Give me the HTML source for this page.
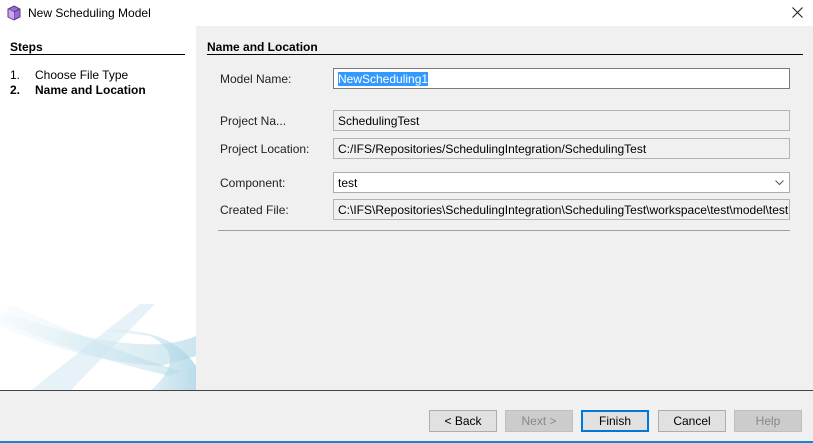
<!DOCTYPE html>
<html><head><style>
*{margin:0;padding:0;box-sizing:border-box}
body{width:813px;height:443px;background:#f0f0f0;font-family:"Liberation Sans",sans-serif;font-size:12px;color:#000;position:relative;overflow:hidden}
.a{position:absolute}
.lbl{position:absolute;left:220px;font-size:12px;color:#222}
.box{position:absolute;left:333px;width:457px;height:21px;border:1px solid #b4b4b4;padding:3px 0 0 4px;white-space:nowrap;overflow:hidden}
.btn{position:absolute;top:410px;width:68px;height:22px;border:1px solid #adadad;background:#e1e1e1;text-align:center;line-height:20px}
</style></head><body>
<div class="a" style="left:0;top:0;width:813px;height:26px;background:#fff"></div>
<svg class="a" style="left:6px;top:5px" width="16" height="16" viewBox="0 0 16 16"><path d="M8 1L14 4V12L8 15L2 12V4Z" fill="#9a6ad0" stroke="#5a3590"/><path d="M2 4L8 7L14 4M8 7V15" fill="none" stroke="#5a3590"/><path d="M2.5 4.3L8 7V14.5L2.5 11.7Z" fill="#c9a8ee"/></svg>
<div class="a" style="left:28px;top:6px;font-size:12px">New Scheduling Model</div>
<svg class="a" style="left:792px;top:7px" width="11" height="11"><path d="M0.5 0.5L10.5 10.5M10.5 0.5L0.5 10.5" stroke="#222" stroke-width="1.1"/></svg>
<div class="a" style="left:0;top:26px;width:196px;height:365px;background:#fff;overflow:hidden">
<svg width="196" height="365" style="position:absolute;left:0;top:0">
<defs><linearGradient id="g" x1="0" x2="1"><stop offset="0" stop-color="#d4eaf3" stop-opacity=".2"/><stop offset="1" stop-color="#a9d3e5"/></linearGradient></defs>
<path d="M0 300 Q80 335 160 340 L196 330 V310 Q140 335 0 285Z" fill="url(#g)" opacity=".6"/>
<path d="M10 278 Q100 320 180 345 L170 350 Q80 330 0 295Z" fill="url(#g)" opacity=".5"/>
<path d="M140 278 L155 278 L70 365 L30 365Z" fill="#cde6f1" opacity=".5"/>
<path d="M100 304 Q170 300 196 340 V365 H150 Q190 330 150 310Z" fill="url(#g)" opacity=".8"/>
</svg>
<div class="a" style="left:10px;top:14px;font-weight:bold">Steps</div>
<div class="a" style="left:10px;top:28px;width:175px;height:1px;background:#000"></div>
<div class="a" style="left:10px;top:42px">1.</div><div class="a" style="left:35px;top:42px">Choose File Type</div>
<div class="a" style="left:10px;top:57px;font-weight:bold">2.</div><div class="a" style="left:35px;top:57px;font-weight:bold">Name and Location</div>
</div>
<div class="a" style="left:207px;top:40px;font-weight:bold">Name and Location</div>
<div class="a" style="left:207px;top:54px;width:596px;height:1px;background:#000"></div>
<div class="lbl" style="top:72px">Model Name:</div>
<div class="box" style="top:68px;background:#fff;border-color:#7a7a7a"><span style="background:#3399ff;color:#fff">NewScheduling1</span></div>
<div class="lbl" style="top:114px">Project Na...</div>
<div class="box" style="top:110px">SchedulingTest</div>
<div class="lbl" style="top:142px">Project Location:</div>
<div class="box" style="top:138px">C:/IFS/Repositories/SchedulingIntegration/SchedulingTest</div>
<div class="lbl" style="top:176px">Component:</div>
<div class="box" style="top:172px;background:#fff;border-color:#acacac">test<svg style="position:absolute;right:5px;top:7px" width="9" height="6"><path d="M0.5 0.5L4.5 4.5L8.5 0.5" fill="none" stroke="#555"/></svg></div>
<div class="lbl" style="top:203px">Created File:</div>
<div class="box" style="top:199px">C:\IFS\Repositories\SchedulingIntegration\SchedulingTest\workspace\test\model\test</div>
<div class="a" style="left:218px;top:230px;width:572px;height:1px;background:#a0a0a0"></div>
<div class="a" style="left:0;top:390px;width:813px;height:1px;background:#444"></div>
<div class="btn" style="left:429px">&lt; Back</div>
<div class="btn" style="left:505px;color:#888;background:#ccc;border-color:#bfbfbf">Next &gt;</div>
<div class="btn" style="left:581px;border:1px solid #0078d7;box-shadow:inset 0 0 0 1px #0078d7">Finish</div>
<div class="btn" style="left:658px">Cancel</div>
<div class="btn" style="left:734px;color:#888;background:#ccc;border-color:#bfbfbf">Help</div>
<div class="a" style="left:0;top:441px;width:813px;height:2px;background:#1883d7"></div>
</body></html>
